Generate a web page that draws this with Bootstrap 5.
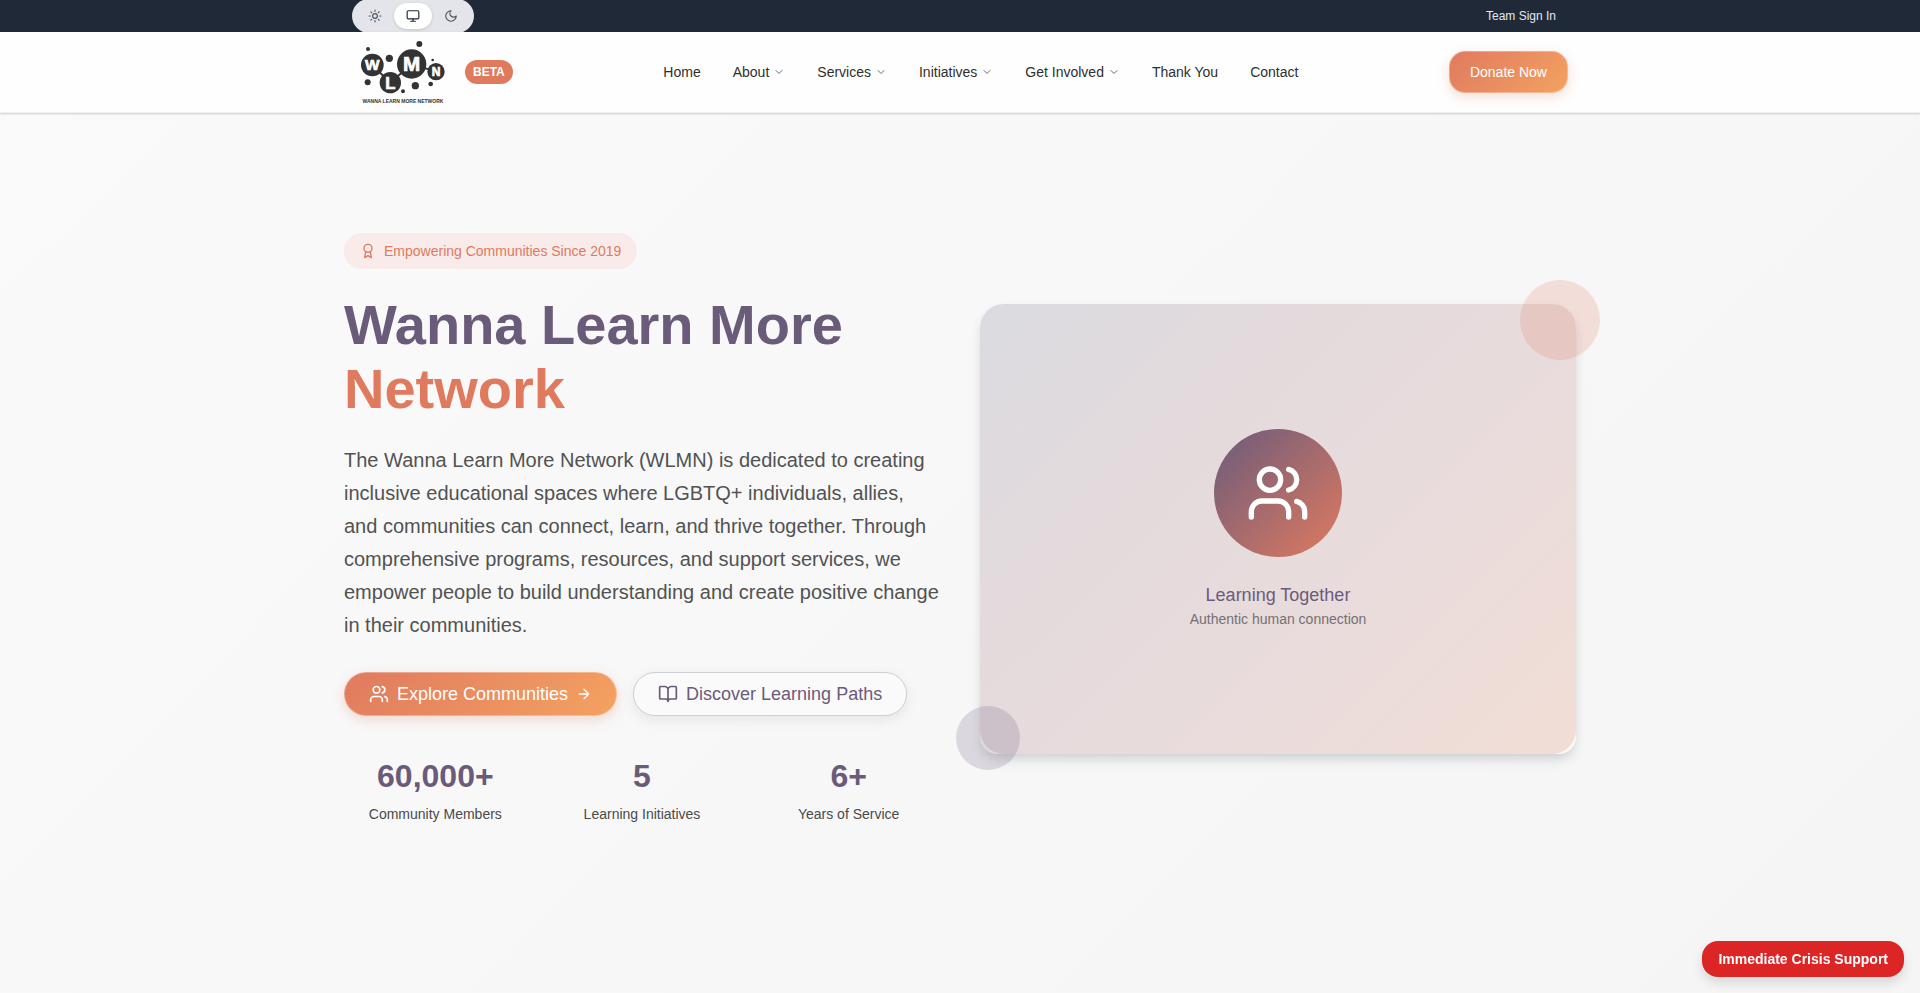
<!DOCTYPE html>
<html lang="en">
<head>
<meta charset="utf-8">
<meta name="viewport" content="width=device-width, initial-scale=1">
<title>Wanna Learn More Network</title>
<link href="https://cdn.jsdelivr.net/npm/bootstrap@5.3.0/dist/css/bootstrap.min.css" rel="stylesheet">
<style>
  :root { --plum: #6b5b7b; --coral: #e07a5f; --amber: #f4a261; --ink: #2f2f2f; }
  body {
    font-family: "Liberation Sans", Arial, sans-serif;
    font-size: 14px; line-height: 20px; color: var(--ink);
    min-height: 100vh;
    background: linear-gradient(135deg, #fafafa, #f5f5f5);
  }
  svg { display: block; flex-shrink: 0; }
  .line-icon { fill: none; stroke: currentColor; stroke-width: 2; stroke-linecap: round; stroke-linejoin: round; }
  .site-shell { max-width: 1280px; }
  .shell-bar { padding-inline: 32px; }
  .shell-hero { padding-inline: 24px; }

  .top-strip { background: #1f2937; height: 32px; overflow: hidden; }
  .theme-switch { background: #e3e5ea; height: 34px; padding: 4px; }
  .theme-switch button { width: 38px; height: 26px; border: 0; background: transparent; color: #4b5563; }
  .theme-switch button.is-on { background: #fff; color: #1f2937; box-shadow: 0 1px 3px rgba(0,0,0,.15); }
  .team-link { font-size: 12px; color: #e2e8f0; padding-inline: 12px; }

  .main-header { background: #fefefe; border-bottom: 1px solid #f0f0f0; box-shadow: 0 1px 2px rgba(0,0,0,.18); position: relative; }
  .main-header .shell-bar { height: 80px; }
  .brand-link { padding-left: 8px; gap: 19px; }
  .beta-pill { background: var(--coral); color: #fff; font-size: 12px; line-height: 16px; padding: 4px 8px; }
  .menu-item { color: var(--ink); padding: 8px 16px; gap: 4px; }
  .menu-item svg { color: #6b6b6b; }

  .pill-warm, .pill-light { border-radius: 22px; }
  .pill-warm {
    color: #fff; border: 1px solid rgba(255,255,255,.3);
    background: linear-gradient(135deg, var(--coral), var(--amber)) border-box;
    box-shadow: 0 4px 12px rgba(224,122,95,.25);
  }
  .pill-light {
    color: var(--plum); border: 1px solid #cfcfd6; background: #fafafa;
    box-shadow: 0 4px 12px rgba(107,91,123,.12);
  }
  .pill-warm:hover { color: #fff; }
  .donate-btn { font-size: 14px; line-height: 20px; padding: 10px 20px; border-radius: 16px; }
  .hero-btn { font-size: 18px; line-height: 28px; padding: 7px 24px; }

  .hero { padding-block: 120px 48px; }
  .hero-grid { --bs-gutter-x: 40px; }
  .since-pill { background: #f8ebea; color: var(--coral); padding: 8px 16px; margin-bottom: 24px; border-radius: 18px; }
  .hero-title { font-size: 56px; line-height: 64px; color: var(--plum); margin-bottom: 23px; }
  .hero-title span { color: var(--coral); }
  .hero-copy { font-size: 20px; line-height: 33px; color: #525252; margin-bottom: 30px; }
  .hero-stats { margin-top: 40px; --bs-gutter-x: 24px; }
  .stat-value { font-size: 32px; line-height: 40px; color: var(--plum); }
  .stat-label { color: #4a4a4a; margin-top: 8px; }

  .art-frame { background: #fafaf8; border-radius: 24px 24px 17px 17px; box-shadow: 0 8px 14px -4px rgba(40,50,60,.2), 0 2px 8px rgba(0,0,0,.04); }
  .art-panel {
    height: 450px; border-radius: 24px;
    background: linear-gradient(135deg, #dadbe0, #e3dadd 30%, #ebdcdb 72%, #f1ddd4);
  }
  .art-disc { width: 128px; height: 128px; margin-bottom: 24px; background: linear-gradient(135deg, var(--plum), var(--coral)); }
  .art-title { font-size: 18px; line-height: 28px; color: var(--plum); }
  .art-note { color: #757075; }
  .bubble-coral { position: absolute; width: 80px; height: 80px; top: -24px; right: -24px; background: rgba(224,122,95,.2); }
  .bubble-plum { position: absolute; width: 64px; height: 64px; bottom: -16px; left: -24px; background: rgba(107,91,123,.2); }

  .crisis-btn {
    background: #dc2626; color: #fff; border: 0; border-radius: 16px;
    font-size: 14px; line-height: 20px; padding: 8px 16px;
    box-shadow: 0 6px 12px rgba(0,0,0,.12);
  }
</style>
</head>
<body>
<svg width="0" height="0" class="position-absolute" aria-hidden="true">
  <symbol id="i-users" viewBox="0 0 24 24"><path d="M16 21v-2a4 4 0 0 0-4-4H6a4 4 0 0 0-4 4v2"/><circle cx="9" cy="7" r="4"/><path d="M22 21v-2a4 4 0 0 0-3-3.87M16 3.13a4 4 0 0 1 0 7.75"/></symbol>
  <symbol id="i-down" viewBox="0 0 24 24"><path d="m6 9 6 6 6-6"/></symbol>
</svg>

<div class="top-strip">
  <div class="container-fluid site-shell shell-bar h-100 d-flex align-items-center justify-content-between">
    <div class="theme-switch rounded-pill d-flex align-items-center" role="group" aria-label="Theme">
      <button type="button" class="rounded-pill d-flex align-items-center justify-content-center p-0" aria-label="Light">
        <svg class="line-icon" width="14" height="14" viewBox="0 0 24 24"><circle cx="12" cy="12" r="4"/><path d="M12 2v2M12 20v2M4.93 4.93l1.41 1.41M17.66 17.66l1.41 1.41M2 12h2M20 12h2M6.34 17.66l-1.41 1.41M19.07 4.93l-1.41 1.41"/></svg>
      </button>
      <button type="button" class="is-on rounded-pill d-flex align-items-center justify-content-center p-0" aria-label="System">
        <svg class="line-icon" width="14" height="14" viewBox="0 0 24 24"><rect x="2" y="3" width="20" height="14" rx="2"/><path d="M8 21h8M12 17v4"/></svg>
      </button>
      <button type="button" class="rounded-pill d-flex align-items-center justify-content-center p-0" aria-label="Dark">
        <svg class="line-icon" width="14" height="14" viewBox="0 0 24 24"><path d="M12 3a6 6 0 0 0 9 9 9 9 0 1 1-9-9Z"/></svg>
      </button>
    </div>
    <a href="#" class="team-link text-decoration-none">Team Sign In</a>
  </div>
</div>

<header class="main-header">
  <div class="container-fluid site-shell shell-bar d-flex align-items-center justify-content-between">
    <a href="#" class="brand-link d-flex align-items-center text-decoration-none">
      <svg width="86" height="64" viewBox="90 120 258 192" role="img" aria-label="Wanna Learn More Network">
        <path d="M127 196 181 248 245 192 318 215" fill="none" stroke="#333" stroke-width="6"/>
        <g fill="#333">
          <circle cx="127" cy="195" r="34"/><circle cx="181" cy="248" r="32"/><circle cx="245" cy="192" r="44"/><circle cx="318" cy="215" r="26"/>
          <circle cx="114" cy="147" r="6"/><circle cx="268" cy="132" r="9"/><circle cx="178" cy="175" r="11"/><circle cx="113" cy="247" r="9"/>
          <circle cx="256" cy="257" r="11"/><circle cx="219" cy="274" r="6"/><circle cx="308" cy="180" r="4"/><circle cx="302" cy="252" r="7"/>
        </g>
        <g fill="#fff" stroke="#fff" stroke-width="2" font-family="Liberation Sans, sans-serif" font-weight="700" text-anchor="middle">
          <text x="127" y="211" font-size="46">W</text><text x="181" y="266" font-size="50">L</text>
          <text x="245" y="213" font-size="62">M</text><text x="318" y="228" font-size="36">N</text>
        </g>
        <text x="219" y="308" font-size="15" font-weight="700" font-family="Liberation Sans, sans-serif" text-anchor="middle" fill="#333">WANNA LEARN MORE NETWORK</text>
      </svg>
      <span class="beta-pill rounded-pill fw-bold">BETA</span>
    </a>
    <nav class="d-flex align-items-center" aria-label="Main">
      <a href="#" class="menu-item text-decoration-none">Home</a>
      <a href="#" class="menu-item text-decoration-none d-flex align-items-center">About<svg class="line-icon" width="12" height="12"><use href="#i-down"/></svg></a>
      <a href="#" class="menu-item text-decoration-none d-flex align-items-center">Services<svg class="line-icon" width="12" height="12"><use href="#i-down"/></svg></a>
      <a href="#" class="menu-item text-decoration-none d-flex align-items-center">Initiatives<svg class="line-icon" width="12" height="12"><use href="#i-down"/></svg></a>
      <a href="#" class="menu-item text-decoration-none d-flex align-items-center">Get Involved<svg class="line-icon" width="12" height="12"><use href="#i-down"/></svg></a>
      <a href="#" class="menu-item text-decoration-none">Thank You</a>
      <a href="#" class="menu-item text-decoration-none">Contact</a>
    </nav>
    <a href="#" class="btn pill-warm donate-btn">Donate Now</a>
  </div>
</header>

<main class="hero">
  <div class="container-fluid site-shell shell-hero">
    <div class="row hero-grid align-items-center">
      <div class="col-6">
        <div class="since-pill d-inline-flex align-items-center gap-2">
          <svg class="line-icon" width="16" height="16" viewBox="0 0 24 24"><circle cx="12" cy="8" r="6"/><path d="M15.48 12.89 17 22l-5-3-5 3 1.52-9.11"/></svg>
          Empowering Communities Since 2019
        </div>
        <h1 class="hero-title fw-bold">Wanna Learn More <span class="d-block">Network</span></h1>
        <p class="hero-copy">The Wanna Learn More Network (WLMN) is dedicated to creating inclusive educational spaces where LGBTQ+ individuals, allies, and communities can connect, learn, and thrive together. Through comprehensive programs, resources, and support services, we empower people to build understanding and create positive change in their communities.</p>
        <div class="d-flex gap-3">
          <a href="#" class="btn pill-warm hero-btn d-flex align-items-center gap-2 text-nowrap">
            <svg class="line-icon" width="20" height="20"><use href="#i-users"/></svg>
            Explore Communities
            <svg class="line-icon" width="16" height="16" viewBox="0 0 24 24"><path d="M5 12h14M12 5l7 7-7 7"/></svg>
          </a>
          <a href="#" class="btn pill-light hero-btn d-flex align-items-center gap-2 text-nowrap">
            <svg class="line-icon" width="20" height="20" viewBox="0 0 24 24"><path d="M12 7v14M3 18a1 1 0 0 1-1-1V4a1 1 0 0 1 1-1h5a4 4 0 0 1 4 4 4 4 0 0 1 4-4h5a1 1 0 0 1 1 1v13a1 1 0 0 1-1 1h-6a3 3 0 0 0-3 3 3 3 0 0 0-3-3z"/></svg>
            Discover Learning Paths
          </a>
        </div>
        <div class="row hero-stats text-center">
          <div class="col-4"><div class="stat-value fw-bold">60,000+</div><div class="stat-label">Community Members</div></div>
          <div class="col-4"><div class="stat-value fw-bold">5</div><div class="stat-label">Learning Initiatives</div></div>
          <div class="col-4"><div class="stat-value fw-bold">6+</div><div class="stat-label">Years of Service</div></div>
        </div>
      </div>
      <div class="col-6">
        <div class="art-frame position-relative">
          <div class="art-panel d-flex flex-column align-items-center justify-content-center">
            <div class="art-disc rounded-circle d-flex align-items-center justify-content-center text-white">
              <svg class="line-icon" width="64" height="64"><use href="#i-users"/></svg>
            </div>
            <div class="art-title">Learning Together</div>
            <div class="art-note">Authentic human connection</div>
          </div>
          <span class="bubble-coral rounded-circle"></span>
          <span class="bubble-plum rounded-circle"></span>
        </div>
      </div>
    </div>
  </div>
</main>

<div class="position-fixed bottom-0 end-0 p-3">
  <button type="button" class="crisis-btn fw-bold d-block">Immediate Crisis Support</button>
</div>
<script src="https://cdn.jsdelivr.net/npm/bootstrap@5.3.0/dist/js/bootstrap.bundle.min.js"></script>
</body>
</html>
